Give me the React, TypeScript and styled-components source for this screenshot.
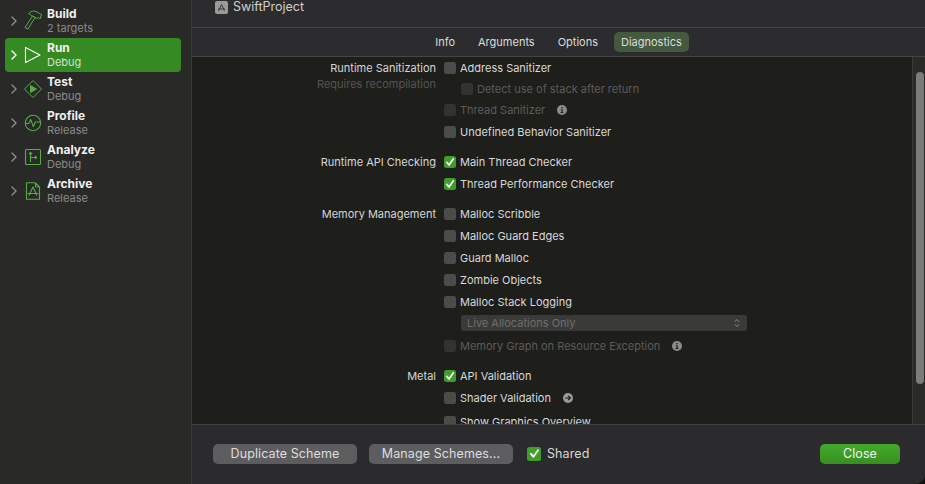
import React from 'react';
import styled, { createGlobalStyle } from 'styled-components';

const GlobalStyle = createGlobalStyle`
  html, body {
    margin: 0;
    padding: 0;
    background: #111;
    font-family: Inter, "Liberation Sans", sans-serif;
    font-size: 11px;
    -webkit-font-smoothing: antialiased;
  }
`;

const Win = styled.div`
  width: 925px;
  height: 484px;
  display: flex;
  overflow: hidden;
  border-bottom-right-radius: 10px;
  background: #2b2b2d;
`;

const Sidebar = styled.aside`
  width: 192px;
  flex-shrink: 0;
  box-sizing: border-box;
  padding-top: 4px;
  background: #292927;
  border-right: 1px solid #3b3b3a;
`;

const SchemeItem = styled.div<{ $active?: boolean }>`
  height: 34px;
  width: 176px;
  margin-left: 5px;
  border-radius: 4px;
  display: flex;
  align-items: center;
  color: ${p => (p.$active ? '#fff' : '#8f8f8c')};
  background: ${p => (p.$active ? '#358a24' : 'transparent')};
`;

const Chevron = styled.svg`
  width: 6px;
  height: 10px;
  margin-left: 6px;
  flex-shrink: 0;
`;

const IconSlot = styled.div`
  width: 18px;
  height: 18px;
  margin-left: 7px;
  flex-shrink: 0;
  svg {
    display: block;
  }
`;

const SchemeText = styled.div`
  margin-left: 5px;
  padding-top: 3px;
  align-self: flex-start;
  display: flex;
  flex-direction: column;
`;

const SchemeName = styled.div`
  font-size: 12px;
  line-height: 14px;
  font-weight: 700;
  color: #f0f0f0;
`;

const SchemeSub = styled.div<{ $active?: boolean }>`
  font-size: 11px;
  line-height: 14px;
  color: ${p => (p.$active ? '#cfe3c9' : '#8b8b88')};
`;

const Main = styled.main`
  flex: 1;
  min-width: 0;
  display: flex;
  flex-direction: column;
`;

const Header = styled.header`
  height: 28px;
  flex-shrink: 0;
  box-sizing: border-box;
  padding: 0 0 13px 23px;
  display: flex;
  align-items: center;
  gap: 5px;
  background: #2c2c2e;
  border-bottom: 1px solid #454545;
`;

const ProjectIcon = styled.div`
  width: 13px;
  height: 13px;
  border-radius: 2px;
  background: #9a9a9a;
  flex-shrink: 0;
`;

const ProjectName = styled.div`
  font-size: 12.5px;
  line-height: 14px;
  color: #cfcfcf;
`;

const TabBar = styled.nav`
  height: 29px;
  flex-shrink: 0;
  box-sizing: border-box;
  display: flex;
  justify-content: center;
  align-items: center;
  gap: 9px;
  background: #2c2c2e;
  border-bottom: 1px solid #454545;
`;

const Tab = styled.div<{ $active?: boolean }>`
  height: 20px;
  padding: 0 7px;
  border-radius: 5px;
  display: flex;
  align-items: center;
  font-size: 11px;
  color: #dcdcdc;
  background: ${p => (p.$active ? '#44593e' : 'transparent')};
`;

const ScrollArea = styled.div`
  flex: 1;
  min-height: 0;
  display: flex;
  background: #1e1e1b;
  overflow: hidden;
`;

const Form = styled.div`
  flex: 1;
  min-width: 0;
  overflow: hidden;
`;

const Rail = styled.div`
  width: 13px;
  flex-shrink: 0;
  box-sizing: border-box;
  padding: 15px 0 40px 3px;
  background: #2a2b27;
  border-left: 1px solid #3c3c39;
`;

const Thumb = styled.div`
  width: 8px;
  height: 312px;
  border-radius: 4px;
  background: #7b7b78;
`;

const Section = styled.section`
  display: grid;
  grid-template-columns: 244px 1fr;
  column-gap: 8px;
  margin-bottom: 8px;
`;

const Label = styled.div`
  text-align: right;
`;

const LabelTitle = styled.div`
  line-height: 22px;
  color: #d6d6d6;
`;

const LabelSub = styled.div`
  line-height: 10px;
  font-size: 11px;
  color: #555553;
`;

const Row = styled.div<{ $indent?: boolean; $height?: number }>`
  height: ${p => p.$height ?? 22}px;
  display: flex;
  align-items: center;
  padding-left: ${p => (p.$indent ? 17 : 0)}px;
`;

const Box = styled.div<{ $checked?: boolean; $disabled?: boolean; $size?: number }>`
  width: ${p => p.$size ?? 12}px;
  height: ${p => p.$size ?? 12}px;
  border-radius: 2.5px;
  flex-shrink: 0;
  display: flex;
  align-items: center;
  justify-content: center;
  background: ${p => (p.$checked ? '#3f9d2b' : p.$disabled ? '#333331' : '#4c4c4b')};
`;

const RowText = styled.span<{ $disabled?: boolean }>`
  margin-left: 4px;
  white-space: nowrap;
  color: ${p => (p.$disabled ? '#5c5c5a' : '#d8d8d8')};
`;

const Trailing = styled.span`
  display: flex;
  margin-left: 12px;
`;

const SelectRow = styled.div`
  height: 20px;
  margin-bottom: 2px;
  display: flex;
  align-items: center;
  padding-left: 17px;
`;

const Select = styled.div`
  width: 286px;
  height: 16px;
  box-sizing: border-box;
  padding: 0 7px 0 6px;
  border-radius: 3px;
  display: flex;
  align-items: center;
  justify-content: space-between;
  background: #3a3a39;
  color: #6f6f6d;
`;

const Footer = styled.footer`
  height: 60px;
  flex-shrink: 0;
  box-sizing: border-box;
  padding: 0 25px 2px 21px;
  display: flex;
  align-items: center;
  background: #2b2b2d;
  border-top: 1px solid #414141;
`;

const Button = styled.div<{ $primary?: boolean }>`
  width: ${p => (p.$primary ? 80 : 144)}px;
  height: 20px;
  margin-right: ${p => (p.$primary ? 0 : 12)}px;
  border-radius: 5px;
  display: flex;
  align-items: center;
  justify-content: center;
  font-size: 12.5px;
  letter-spacing: 0.1px;
  color: ${p => (p.$primary ? '#f2f2f2' : '#dedede')};
  background: ${p => (p.$primary ? 'linear-gradient(#45a92d, #37901f)' : '#5d5d5f')};
`;

const SharedToggle = styled.div`
  margin-left: 2px;
  display: flex;
  align-items: center;
  gap: 6px;
  font-size: 12.5px;
  letter-spacing: 0.1px;
  color: #d8d8d8;
`;

const Spacer = styled.div`
  flex: 1;
`;

const GREEN = '#55ad44';

const Arrow = ({ active }: { active?: boolean }) => (
  <Chevron viewBox="0 0 6 10" fill="none" stroke={active ? '#fff' : '#8c8c8a'} strokeWidth="1.4" strokeLinecap="round" strokeLinejoin="round">
    <path d="M1 1l4 4-4 4" />
  </Chevron>
);

const HammerIcon = () => (
  <svg width="18" height="20" viewBox="0 0 18 20" fill="none" stroke={GREEN} strokeWidth="1" strokeLinejoin="round" style={{ marginTop: -2 }}>
    <path d="M1 17.500L8.500 6 11 7.500 4 19z" />
    <path d="M4.500 3.500C7 1 10 .5 12 1.500l5.500 3L16 9l-1.500-1.500L13 8.500 7.500 5.500C6.500 4.500 5.500 4 4.500 3.500z" />
  </svg>
);

const PlayIcon = () => (
  <svg width="18" height="18" viewBox="0 0 18 18" fill="none" stroke="#fff" strokeWidth="1.1" strokeLinejoin="round">
    <path d="M1.500 1.500L16 9 1.500 16.500z" />
  </svg>
);

const TestIcon = () => (
  <svg width="18" height="18" viewBox="0 0 18 18" fill="none" stroke={GREEN} strokeWidth="1" strokeLinejoin="round">
    <path d="M9 .5L17.500 9 9 17.500.5 9z" />
    <path d="M6.500 5.500L12.500 9l-6 3.500z" fill={GREEN} />
  </svg>
);

const ProfileIcon = () => (
  <svg width="18" height="18" viewBox="0 0 18 18" fill="none" stroke={GREEN} strokeWidth="1.1" strokeLinejoin="round">
    <circle cx="9" cy="9" r="7.700" />
    <path d="M1.500 9.500h3.200l2-4 2.600 7 2-4.500h5" />
  </svg>
);

const AnalyzeIcon = () => (
  <svg width="18" height="18" viewBox="0 0 18 18" fill="none" stroke={GREEN} strokeWidth="1.1" strokeLinejoin="round">
    <rect x="1.500" y="1.500" width="15" height="15" rx="1" />
    <path d="M6.500 14V4.500M4.800 6.200l1.700-1.900 1.700 1.900M6.500 9.500h6M11 8l1.600 1.500L11 11" />
  </svg>
);

const ArchiveIcon = () => (
  <svg width="18" height="18" viewBox="0 0 18 18" fill="none" stroke={GREEN} strokeWidth="1.1" strokeLinejoin="round">
    <path d="M2.500.8h9l4 4v12.400h-13zM11.500.8v4h4" />
    <path d="M5 13.500L9 5l4 8.500M3.500 11.500h11" />
  </svg>
);

const CheckMark = ({ size = 10 }: { size?: number }) => (
  <svg width={size} height={size} viewBox="0 0 10 10" fill="none" stroke="#fff" strokeWidth="1.7" strokeLinecap="round" strokeLinejoin="round">
    <path d="M1.800 5.300l2.200 2.700 4.200-6" />
  </svg>
);

const InfoIcon = () => (
  <svg width="10" height="10" viewBox="0 0 10 10">
    <circle cx="5" cy="5" r="5" fill="#8b8b89" />
    <path d="M4.300 2h1.400v1.300H4.300zM3.800 4.200h1.900v2.900h.7v.9H3.600v-.9h.9v-2h-.7z" fill="#1e1e1b" />
  </svg>
);

const GoIcon = () => (
  <svg width="10" height="10" viewBox="0 0 10 10">
    <circle cx="5" cy="5" r="5" fill="#9b9b99" />
    <path d="M2.200 5h5M5.200 2.800L7.400 5 5.200 7.200" fill="none" stroke="#1e1e1b" strokeWidth="1.200" />
  </svg>
);

const StepperIcon = () => (
  <svg width="6" height="10" viewBox="0 0 6 10" fill="none" stroke="#8a8a88" strokeWidth="1" strokeLinecap="round" strokeLinejoin="round">
    <path d="M1 3.500L3 1.500l2 2M1 6.500l2 2 2-2" />
  </svg>
);

const ProjectGlyph = () => (
  <svg width="13" height="13" viewBox="0 0 13 13" fill="none" stroke="#3a3a3a" strokeWidth="1">
    <path d="M3.500 10L6.500 3.500 9.500 10M3 8h7" />
  </svg>
);

const schemes = [
  { name: 'Build', sub: '2 targets', icon: <HammerIcon /> },
  { name: 'Run', sub: 'Debug', icon: <PlayIcon />, active: true },
  { name: 'Test', sub: 'Debug', icon: <TestIcon /> },
  { name: 'Profile', sub: 'Release', icon: <ProfileIcon /> },
  { name: 'Analyze', sub: 'Debug', icon: <AnalyzeIcon /> },
  { name: 'Archive', sub: 'Release', icon: <ArchiveIcon /> },
];

const tabs = ['Info', 'Arguments', 'Options', 'Diagnostics'];

type OptionProps = {
  text: string;
  checked?: boolean;
  disabled?: boolean;
  indent?: boolean;
  height?: number;
  trailing?: React.ReactNode;
};

const Option = ({ text, checked, disabled, indent, height, trailing }: OptionProps) => (
  <Row $indent={indent} $height={height}>
    <Box $checked={checked} $disabled={disabled}>
      {checked && <CheckMark />}
    </Box>
    <RowText $disabled={disabled}>{text}</RowText>
    {trailing && <Trailing>{trailing}</Trailing>}
  </Row>
);

const App: React.FC = () => {
  return (
    <Win>
      <GlobalStyle />
      <Sidebar>
        {schemes.map(s => (
          <SchemeItem key={s.name} $active={s.active}>
            <Arrow active={s.active} />
            <IconSlot>{s.icon}</IconSlot>
            <SchemeText>
              <SchemeName>{s.name}</SchemeName>
              <SchemeSub $active={s.active}>{s.sub}</SchemeSub>
            </SchemeText>
          </SchemeItem>
        ))}
      </Sidebar>
      <Main>
        <Header>
          <ProjectIcon>
            <ProjectGlyph />
          </ProjectIcon>
          <ProjectName>SwiftProject</ProjectName>
        </Header>
        <TabBar>
          {tabs.map(t => (
            <Tab key={t} $active={t === 'Diagnostics'}>
              {t}
            </Tab>
          ))}
        </TabBar>
        <ScrollArea>
          <Form>
            <Section>
              <Label>
                <LabelTitle>Runtime Sanitization</LabelTitle>
                <LabelSub>Requires recompilation</LabelSub>
              </Label>
              <div>
                <Option text="Address Sanitizer" />
                <Option text="Detect use of stack after return" disabled indent height={20} />
                <Option text="Thread Sanitizer" disabled trailing={<InfoIcon />} />
                <Option text="Undefined Behavior Sanitizer" />
              </div>
            </Section>
            <Section>
              <Label>
                <LabelTitle>Runtime API Checking</LabelTitle>
              </Label>
              <div>
                <Option text="Main Thread Checker" checked />
                <Option text="Thread Performance Checker" checked />
              </div>
            </Section>
            <Section>
              <Label>
                <LabelTitle>Memory Management</LabelTitle>
              </Label>
              <div>
                <Option text="Malloc Scribble" />
                <Option text="Malloc Guard Edges" />
                <Option text="Guard Malloc" />
                <Option text="Zombie Objects" />
                <Option text="Malloc Stack Logging" />
                <SelectRow>
                  <Select>
                    Live Allocations Only
                    <StepperIcon />
                  </Select>
                </SelectRow>
                <Option text="Memory Graph on Resource Exception" disabled trailing={<InfoIcon />} />
              </div>
            </Section>
            <Section>
              <Label>
                <LabelTitle>Metal</LabelTitle>
              </Label>
              <div>
                <Option text="API Validation" checked />
                <Option text="Shader Validation" trailing={<GoIcon />} />
                <Option text="Show Graphics Overview" height={26} />
              </div>
            </Section>
          </Form>
          <Rail>
            <Thumb />
          </Rail>
        </ScrollArea>
        <Footer>
          <Button>Duplicate Scheme</Button>
          <Button>Manage Schemes...</Button>
          <SharedToggle>
            <Box $checked $size={14}>
              <CheckMark size={11} />
            </Box>
            Shared
          </SharedToggle>
          <Spacer />
          <Button $primary>Close</Button>
        </Footer>
      </Main>
    </Win>
  );
};

export default App;
